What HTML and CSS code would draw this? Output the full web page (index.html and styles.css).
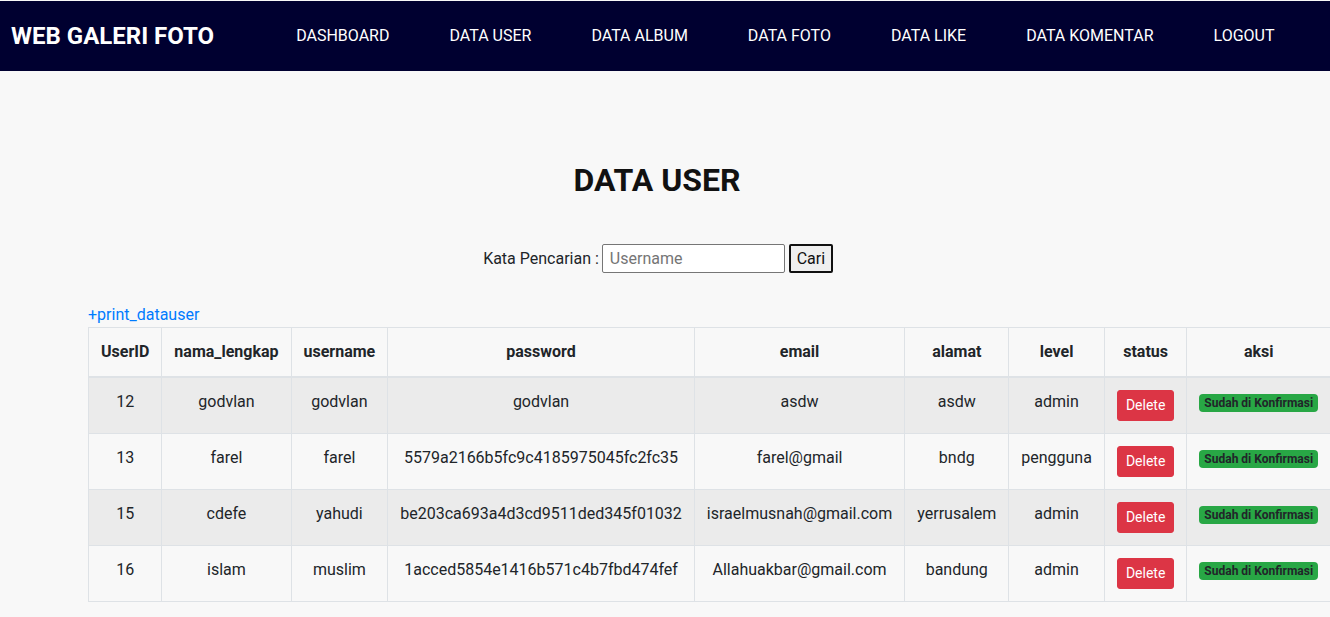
FILE: index.html
```html
<!DOCTYPE html>
<html>
<head>
<meta charset="utf-8">
<title>Data User</title>
<link rel="stylesheet" href="styles.css">
</head>
<body>
<nav class="navbar">
  <div class="brand">WEB GALERI FOTO</div>
  <ul class="menu">
    <li><a href="#">DASHBOARD</a></li>
    <li><a href="#">DATA USER</a></li>
    <li><a href="#">DATA ALBUM</a></li>
    <li><a href="#">DATA FOTO</a></li>
    <li><a href="#">DATA LIKE</a></li>
    <li><a href="#">DATA KOMENTAR</a></li>
    <li><a href="#">LOGOUT</a></li>
  </ul>
</nav>
<main class="content">
  <h2 class="title">DATA USER</h2>
  <form class="search">
    <label>Kata Pencarian :</label>
    <input type="text" class="search-input" placeholder="Username">
    <button type="button" class="search-btn">Cari</button>
  </form>
  <div class="table-area">
    <a href="#" class="print-link">+print_datauser</a>
    <table class="table">
      <thead>
        <tr>
          <th>UserID</th><th>nama_lengkap</th><th>username</th><th>password</th><th>email</th><th>alamat</th><th>level</th><th>status</th><th>aksi</th>
        </tr>
      </thead>
      <tbody>
        <tr class="odd">
          <td>12</td><td>godvlan</td><td>godvlan</td><td>godvlan</td><td>asdw</td><td>asdw</td><td>admin</td>
          <td><a href="#" class="btn-delete">Delete</a></td>
          <td><span class="badge">Sudah di Konfirmasi</span></td>
        </tr>
        <tr>
          <td>13</td><td>farel</td><td>farel</td><td>5579a2166b5fc9c4185975045fc2fc35</td><td>farel@gmail</td><td>bndg</td><td>pengguna</td>
          <td><a href="#" class="btn-delete">Delete</a></td>
          <td><span class="badge">Sudah di Konfirmasi</span></td>
        </tr>
        <tr class="odd">
          <td>15</td><td>cdefe</td><td>yahudi</td><td>be203ca693a4d3cd9511ded345f01032</td><td>israelmusnah@gmail.com</td><td>yerrusalem</td><td>admin</td>
          <td><a href="#" class="btn-delete">Delete</a></td>
          <td><span class="badge">Sudah di Konfirmasi</span></td>
        </tr>
        <tr>
          <td>16</td><td>islam</td><td>muslim</td><td>1acced5854e1416b571c4b7fbd474fef</td><td>Allahuakbar@gmail.com</td><td>bandung</td><td>admin</td>
          <td><a href="#" class="btn-delete">Delete</a></td>
          <td><span class="badge">Sudah di Konfirmasi</span></td>
        </tr>
      </tbody>
    </table>
  </div>
</main>
</body>
</html>
```
FILE: styles.css
```css
* { box-sizing: border-box; }
html, body {
  margin: 0;
  padding: 0;
  background: #f8f8f8;
  font-family: Roboto, "Liberation Sans", Arial, sans-serif;
  font-size: 16px;
  line-height: 1.5;
  color: #212529;
  overflow: hidden;
}
body { padding-top: 1px; }
.navbar {
  background: #000030;
  height: 70px;
  display: flex;
  align-items: center;
  padding-left: 11px;
}
.brand {
  color: #fff;
  font-weight: 700;
  font-size: 24px;
  letter-spacing: 0;
  margin-right: 52px;
}
.menu {
  list-style: none;
  margin: 0;
  padding: 0;
  display: flex;
}
.menu li a {
  display: block;
  color: #fff;
  text-decoration: none;
  padding: 0 30px;
  font-size: 16px;
}
.content {
  display: flex;
  flex-direction: column;
}
.title {
  margin: 90px 0 0;
  text-align: center;
  font-size: 32px;
  font-weight: 700;
  line-height: 1.2;
  color: #111;
  padding-right: 16px;
}
.search {
  margin-top: 45px;
  display: flex;
  justify-content: center;
  align-items: center;
  padding-right: 14px;
}
.search label { margin-right: 3px; color: #212529; }
.search-input {
  width: 183px;
  height: 29px;
  border: 1px solid #767676;
  border-radius: 2px;
  padding: 1px 7px;
  font-family: Roboto, "Liberation Sans", sans-serif;
  font-size: 16px;
  background: #fff;
  color: #333;
}
.search-input::placeholder { color: #757575; }
.search-btn {
  margin-left: 4px;
  height: 29px;
  width: 44px;
  border: 2px solid #111;
  border-radius: 2px;
  background: #efefef;
  font-family: Roboto, "Liberation Sans", sans-serif;
  font-size: 16px;
  color: #111;
  padding: 0 4px;
}
.table-area {
  margin-top: 30px;
  padding-left: 88px;
  display: flex;
  flex-direction: column;
  align-items: flex-start;
}
.print-link {
  color: #007bff;
  text-decoration: none;
  line-height: 24px;
}
.table {
  border-collapse: collapse;
  white-space: nowrap;
}
.table th, .table td {
  border: 1px solid #dee2e6;
  padding: 12px;
  text-align: center;
  vertical-align: top;
}
.table th { font-weight: 700; }
.table thead th { border-bottom: 2px solid #dee2e6; }
.table tr.odd td { background: rgba(0, 0, 0, 0.05); }
.btn-delete {
  display: inline-block;
  background: #dc3545;
  color: #fff;
  text-decoration: none;
  font-size: 14px;
  line-height: 1.5;
  padding: 4px 8px;
  border-radius: 3px;
  border: 1px solid #dc3545;
}
.badge {
  display: inline-block;
  background: #28a745;
  color: #212529;
  font-size: 12px;
  font-weight: 700;
  line-height: 1;
  padding: 3px 5px;
  border-radius: 4px;
  vertical-align: baseline;
}
```
